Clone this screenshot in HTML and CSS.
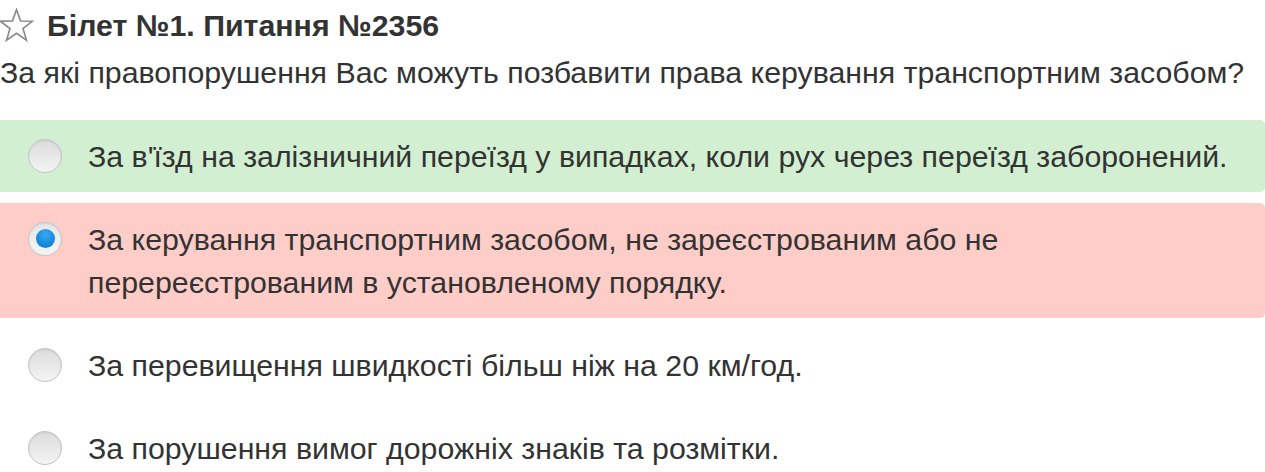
FILE: index.html
```html
<!DOCTYPE html>
<html lang="uk">
<head>
<meta charset="utf-8">
<link rel="stylesheet" href="styles.css">
</head>
<body>
<div class="page">
  <h1 class="title">
    <svg class="star" viewBox="0 0 34 34" width="35" height="35"><path d="M17 1.5 L20.9 12.6 L32.6 12.8 L23.3 19.9 L26.7 31.2 L17 24.5 L7.3 31.2 L10.7 19.9 L1.4 12.8 L13.1 12.6 Z" fill="none" stroke="#8a8a8a" stroke-width="1.6" stroke-linejoin="miter"/></svg>
    <span>Білет №1. Питання №2356</span>
  </h1>
  <p class="question">За які правопорушення Вас можуть позбавити права керування транспортним засобом?</p>
  <div class="answers">
    <div class="answer correct">
      <span class="radio"></span>
      <span class="text">За в'їзд на залізничний переїзд у випадках, коли рух через переїзд заборонений.</span>
    </div>
    <div class="answer wrong">
      <span class="radio checked"></span>
      <span class="text">За керування транспортним засобом, не зареєстрованим або не перереєстрованим в установленому порядку.</span>
    </div>
    <div class="answer">
      <span class="radio"></span>
      <span class="text">За перевищення швидкості більш ніж на 20 км/год.</span>
    </div>
    <div class="answer">
      <span class="radio"></span>
      <span class="text">За порушення вимог дорожніх знаків та розмітки.</span>
    </div>
  </div>
</div>
</body>
</html>
```
FILE: styles.css
```css
html, body {
  margin: 0;
  padding: 0;
  background: #fff;
}
body {
  font-family: "Liberation Sans", Arial, sans-serif;
  color: #333;
  overflow: hidden;
}
.page {
  width: 1265px;
}
.title {
  display: flex;
  align-items: center;
  gap: 13px;
  margin: 0;
  padding-top: 6px;
  height: 39px;
  font-size: 30.3px;
  line-height: 39px;
  font-weight: bold;
  color: #333;
}
.star {
  display: block;
  flex: none;
  margin-left: -1px;
}
.question {
  margin: 0;
  font-size: 30.3px;
  line-height: 40px;
  padding-top: 8px;
  white-space: nowrap;
}
.answers {
  margin-top: 27px;
  margin-left: -10px;
  display: flex;
  flex-direction: column;
  gap: 11px;
}
.answer {
  display: flex;
  align-items: flex-start;
  gap: 26px;
  padding: 14.5px 28px 14.5px 38px;
  border-radius: 5px;
  font-size: 30.3px;
  line-height: 43px;
}
.answer.correct {
  background: #d2f0d1;
}
.answer.wrong {
  background: #fecdc8;
}
.radio {
  flex: none;
  box-sizing: border-box;
  width: 34px;
  height: 34px;
  margin-top: 4px;
  border-radius: 50%;
  border: 1px solid #c4c4c4;
  background: linear-gradient(#dcdcdc, #f4f4f4);
  box-shadow: inset 0 1px 2px rgba(0,0,0,0.08);
  position: relative;
}
.radio.checked {
  background: linear-gradient(#e6e6e6, #f6f6f6);
}
.radio.checked::after {
  content: "";
  position: absolute;
  left: 6.5px;
  top: 6.5px;
  width: 19px;
  height: 19px;
  border-radius: 50%;
  background: radial-gradient(circle at 50% 30%, #3aaaf0, #0d80d8 75%);
}
.text {
  flex: 1;
}
```
